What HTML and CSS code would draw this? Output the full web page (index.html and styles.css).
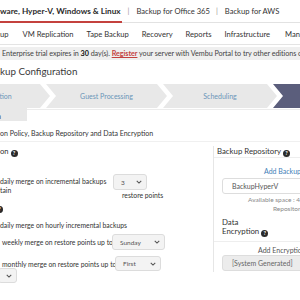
FILE: index.html
```html
<!DOCTYPE html>
<html>
<head>
    <meta charset="UTF-8">
    <title>Backup Configuration</title>
    <link rel="stylesheet" href="styles.css">
</head>
<body>
    <div class="product-tabs">
        <span class="product-tab active">ware, Hyper-V, Windows &amp; Linux</span>
        <span class="sep">|</span>
        <span class="product-tab">Backup for Office 365</span>
        <span class="sep">|</span>
        <span class="product-tab">Backup for AWS</span>
    </div>

    <nav class="menu">
        <span class="menu-item first">up</span>
        <span class="menu-item">VM Replication</span>
        <span class="menu-item">Tape Backup</span>
        <span class="menu-item">Recovery</span>
        <span class="menu-item">Reports</span>
        <span class="menu-item">Infrastructure</span>
        <span class="menu-item">Management</span>
    </nav>

    <div class="trial">
        Enterprise trial expires in <b>30</b> day(s). <a class="register">Register</a> your server with Vembu Portal to try other editions of the product
    </div>

    <div class="page-title">kup Configuration</div>

    <div class="stepper">
        <div class="step step-first"><span>ation</span></div>
        <div class="step step-guest"><span>Guest Processing</span></div>
        <div class="step step-sched"><span>Scheduling</span></div>
        <div class="step step-active"><span>Retention</span></div>
    </div>

    <div class="subtabs">
        <div class="subtab"><span>n</span></div>
        <div class="subtab-active"></div>
    </div>

    <div class="section-desc">on Policy, Backup Repository and Data Encryption</div>

    <div class="config">
        <div class="retention">
            <div class="group-title">on <span class="help">?</span></div>

            <div class="rule rule-daily">
                <div class="rule-text">daily merge on incremental backups<br>tain</div>
                <div class="rule-control">
                    <div class="select select-count">3<svg class="chev" viewBox="0 0 8 5"><path d="M1 1l3 3 3-3"/></svg></div>
                    <div class="unit">restore points</div>
                </div>
            </div>

            <div class="group-title group-cut"><span class="help">?</span></div>
            <div class="rule-line">daily merge on hourly incremental backups</div>

            <div class="rule rule-weekly">
                <div class="rule-text">weekly merge on restore points up to</div>
                <div class="select select-day">Sunday<svg class="chev" viewBox="0 0 8 5"><path d="M1 1l3 3 3-3"/></svg></div>
            </div>

            <div class="rule rule-monthly">
                <div class="rule-text">monthly merge on restore points up to</div>
                <div class="select select-week">First<svg class="chev" viewBox="0 0 8 5"><path d="M1 1l3 3 3-3"/></svg></div>
            </div>
            <div class="select select-wrap"><svg class="chev" viewBox="0 0 8 5"><path d="M1 1l3 3 3-3"/></svg></div>
        </div>

        <div class="target">
            <div class="target-title">Backup Repository <span class="help">?</span></div>
            <div class="target-box">
                <div class="add-link">Add Backup Repository</div>
                <div class="field">BackupHyperV</div>
                <div class="hint hint-space">Available space : 41 GB</div>
                <div class="hint hint-repo">Repository</div>
                <div class="target-sub">Data<br>Encryption <span class="help">?</span></div>
                <div class="enc-box">
                    <div class="add-enc">Add Encryption Key</div>
                    <div class="field field-disabled">[System Generated]</div>
                </div>
            </div>
        </div>
    </div>
</body>
</html>
```

FILE: styles.css
```css
body {
    margin: 0;
    padding: 0;
    font-family: Lato, "Open Sans", sans-serif;
    color: #333;
    background: #fff;
    width: 300px;
    height: 300px;
    overflow: hidden;
}
.product-tabs {
    display: flex;
    align-items: center;
    height: 22px;
    font-size: 7.6px;
    white-space: nowrap;
    border-bottom: 1px solid #e2e2e2;
}
.product-tab {
    display: flex;
    align-items: center;
    height: 22px;
    box-sizing: border-box;
}
.product-tab.active {
    font-size: 8.2px;
    font-weight: bold;
    color: #2b2b2b;
    padding-right: 1px;
    border-bottom: 2px solid #c4413e;
    margin-bottom: -1px;
}
.sep {
    color: #999;
    margin: 0 7px 0 6px;
}
.menu {
    display: flex;
    align-items: center;
    gap: 13px;
    height: 21px;
    font-size: 7.6px;
    white-space: nowrap;
    border-bottom: 1px solid #e4e4e4;
}
.menu-item.first {
    margin-right: 1px;
}
.menu-item:last-child {
    margin-left: 2px;
}
.trial {
    margin-top: 2px;
    height: 13px;
    line-height: 13px;
    background: #efefef;
    font-size: 7.2px;
    padding-left: 2px;
    white-space: nowrap;
    color: #444;
    letter-spacing: -0.05px;
}
.trial b {
    color: #111;
}
.register {
    color: #c4413e;
    font-weight: bold;
    text-decoration: underline;
}
.page-title {
    font-size: 9.8px;
    margin-top: 4px;
    height: 15px;
    line-height: 15px;
    color: #3a3a3a;
}
.stepper {
    display: flex;
    margin-top: 5px;
    height: 24px;
    white-space: nowrap;
}
.step {
    flex: none;
    height: 24px;
    display: flex;
    align-items: center;
    justify-content: center;
    background: #e8e8e8;
    color: #6a95b8;
    font-size: 7px;
    margin-left: -4px;
    clip-path: polygon(0 0, calc(100% - 10px) 0, 100% 50%, calc(100% - 10px) 100%, 0 100%, 10px 50%);
}
.step-first {
    width: 50px;
    margin-left: 0;
    justify-content: flex-start;
    clip-path: polygon(0 0, calc(100% - 10px) 0, 100% 50%, calc(100% - 10px) 100%, 0 100%);
}
.step-first span {
    margin-left: -4px;
}
.step-guest {
    width: 121px;
}
.step-sched {
    width: 114px;
}
.step-active {
    width: 120px;
    background: #5b5e7c;
    color: #fff;
}
.subtabs {
    display: flex;
    height: 13px;
}
.subtab {
    width: 27px;
    background: #e8e8e8;
    font-size: 7px;
    display: flex;
    align-items: flex-end;
    overflow: hidden;
}
.subtab span {
    margin-left: -3px;
    line-height: 10px;
}
.subtab-active {
    flex: 1;
    border-top: 1px solid #ececec;
    margin-top: 1px;
}
.section-desc {
    font-size: 7px;
    padding: 8px 0 4px;
    white-space: nowrap;
    border-bottom: 1px solid #f0f0f0;
}
.config {
    display: grid;
    grid-template-columns: 213px 150px;
    margin-top: 4px;
}
.retention {
    font-size: 6.8px;
    white-space: nowrap;
}
.help {
    display: inline-flex;
    align-items: center;
    justify-content: center;
    width: 7px;
    height: 7px;
    border-radius: 50%;
    background: #2a2a2a;
    color: #fff;
    font-size: 5.5px;
    font-weight: bold;
    vertical-align: -1px;
}
.group-title {
    font-size: 7.6px;
    height: 11px;
    line-height: 11px;
}
.group-cut {
    margin-left: -4px;
    margin-top: 3px;
}
.rule {
    display: flex;
    align-items: flex-start;
}
.rule-daily {
    margin-top: 17px;
}
.rule-daily .rule-text {
    width: 113px;
    line-height: 9px;
    padding-top: 3px;
}
.rule-control {
    display: flex;
    flex-direction: column;
}
.select {
    display: flex;
    align-items: center;
    justify-content: space-between;
    box-sizing: border-box;
    height: 16px;
    padding: 0 4px 0 7px;
    background: #f3f3f3;
    border: 1px solid #dcdcdc;
    border-radius: 3px;
    color: #555;
    font-size: 6.5px;
}
.chev {
    width: 6px;
    height: 4px;
    fill: none;
    stroke: #555;
    stroke-width: 1.4;
}
.select-count {
    width: 34px;
}
.unit {
    margin: 1px 0 0 9px;
}
.rule-line {
    margin-top: 6px;
    height: 12px;
    line-height: 12px;
}
.rule-weekly {
    margin-top: 3px;
    align-items: center;
}
.rule-weekly .rule-text,
.rule-monthly .rule-text {
    padding-left: 2px;
}
.rule-weekly .rule-text {
    width: 110px;
}
.select-day {
    width: 53px;
}
.rule-monthly {
    margin-top: 6px;
    align-items: center;
}
.rule-monthly .rule-text {
    width: 113px;
}
.select-week {
    width: 46px;
    height: 15px;
}
.select-wrap {
    width: 19px;
    height: 15px;
    margin-top: -3px;
    margin-left: -2px;
    justify-content: flex-end;
}
.target {
    border-left: 1px solid #e6e6e6;
    font-size: 7.8px;
    white-space: nowrap;
    height: 126px;
}
.target-title {
    padding-left: 3px;
    height: 11px;
    line-height: 11px;
}
.target-box {
    border-top: 1px solid #eeeeee;
    padding: 9px 0 0 8px;
}
.add-link {
    color: #3f7fb8;
    font-size: 7px;
    padding-left: 42px;
    line-height: 9px;
}
.field {
    box-sizing: border-box;
    height: 16px;
    margin-top: 2px;
    border: 1px solid #dddddd;
    border-radius: 3px;
    padding-left: 9px;
    display: flex;
    align-items: center;
    font-size: 7px;
    color: #555;
}
.hint {
    font-size: 6.5px;
    color: #888;
    line-height: 9px;
}
.hint-space {
    padding-left: 26px;
    margin-top: 1px;
}
.hint-repo {
    padding-left: 51px;
}
.target-sub {
    margin-top: 5px;
    line-height: 9px;
    color: #333;
}
.enc-box {
    border-top: 1px solid #eeeeee;
    margin: 4px 0 0 -8px;
    padding: 4px 0 0 8px;
}
.add-enc {
    font-size: 7px;
    color: #555;
    padding-left: 36px;
    line-height: 9px;
}
.field-disabled {
    background: #ececec;
    color: #666;
    margin-top: 0;
}
```
